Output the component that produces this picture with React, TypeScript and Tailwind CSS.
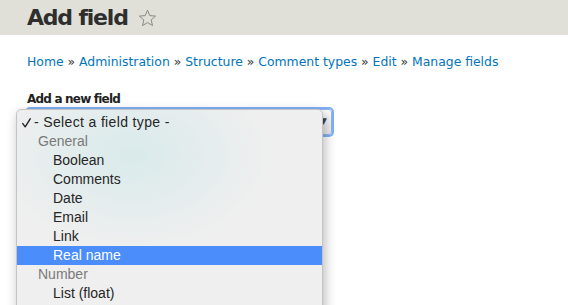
import React from "react";

const crumbs = ["Home", "Administration", "Structure", "Comment types", "Edit", "Manage fields"];

type Row = { label: string; kind: "selected" | "group" | "item"; active?: boolean };

const rows: Row[] = [
  { label: "- Select a field type -", kind: "selected" },
  { label: "General", kind: "group" },
  { label: "Boolean", kind: "item" },
  { label: "Comments", kind: "item" },
  { label: "Date", kind: "item" },
  { label: "Email", kind: "item" },
  { label: "Link", kind: "item" },
  { label: "Real name", kind: "item", active: true },
  { label: "Number", kind: "group" },
  { label: "List (float)", kind: "item" },
];

function Star() {
  return (
    <svg width="19" height="18" viewBox="0 0 19 18" className="ml-[10px] mt-[1px]">
      <path
        d="M9.5 1.2 L11.8 6.6 L17.6 7.1 L13.2 10.9 L14.5 16.6 L9.5 13.6 L4.5 16.6 L5.8 10.9 L1.4 7.1 L7.2 6.6 Z"
        fill="none"
        stroke="#8a8a80"
        strokeWidth="1"
        strokeLinejoin="round"
      />
    </svg>
  );
}

function Check() {
  return (
    <span className="w-[17px] flex items-center pl-[5px]">
      <svg width="9" height="10" viewBox="0 0 9 10">
        <path d="M0.8 5.6 L3.2 8.8 L8.2 0.8" fill="none" stroke="#222" strokeWidth="1.4" strokeLinecap="round" strokeLinejoin="round" />
      </svg>
    </span>
  );
}

function Menu() {
  return (
    <div className="absolute left-[-12px] top-[-1px] w-[307px] h-[220px] rounded-t-[5px] border border-[#c4c4c4] bg-[radial-gradient(ellipse_140px_95px_at_115px_45px,#d9eaeb_0%,#efefef_100%)] pt-[3px] shadow-[2px_4px_12px_rgba(0,0,0,0.28)] font-['Liberation_Sans',Arial,sans-serif] text-[14px]">
      {rows.map((r) => (
        <div
          key={r.label}
          className={
            "h-[19px] flex items-center " +
            (r.active ? "bg-[#4a8dfb] text-white" : r.kind === "group" ? "text-[#7a7a7a]" : "text-[#262626]")
          }
        >
          {r.kind === "selected" ? (
            <>
              <Check />
              <span className="tracking-[0.35px]">{r.label}</span>
            </>
          ) : r.kind === "group" ? (
            <span className="pl-[21px]">{r.label}</span>
          ) : (
            <span className="pl-[36px]">{r.label}</span>
          )}
        </div>
      ))}
    </div>
  );
}

export default function App() {
  return (
    <div className="w-[568px] h-[305px] overflow-hidden bg-white font-['DejaVu_Sans',sans-serif]">
      <header className="h-[35px] bg-[#e0e0d8] px-[27px] flex items-center">
        <h1 className="text-[22px] leading-none font-bold tracking-[-1.2px] text-[#2e2e2e]">Add field</h1>
        <Star />
      </header>
      <div className="px-[27px] pt-[18px]">
        <nav className="text-[12.4px] leading-[18px] text-[#0074bd]">
          {crumbs.map((c, i) => (
            <span key={c}>
              {i > 0 && <span className="text-[#333]"> » </span>}
              {c}
            </span>
          ))}
        </nav>
        <label className="block mt-[20px] text-[12px] leading-[16px] font-bold tracking-[-0.8px] text-[#222]">
          Add a new field
        </label>
        <div className="relative mt-[2px] w-[305px] h-[26px] rounded-[3px] border border-[#8fb7ef] bg-[linear-gradient(#fdfdfd,#e8e8e8)] shadow-[0_0_0_2px_#7fb0f5]">
          <span className="absolute right-[4px] top-[5px] text-[9px] text-[#444]">▼</span>
          <Menu />
        </div>
      </div>
    </div>
  );
}
